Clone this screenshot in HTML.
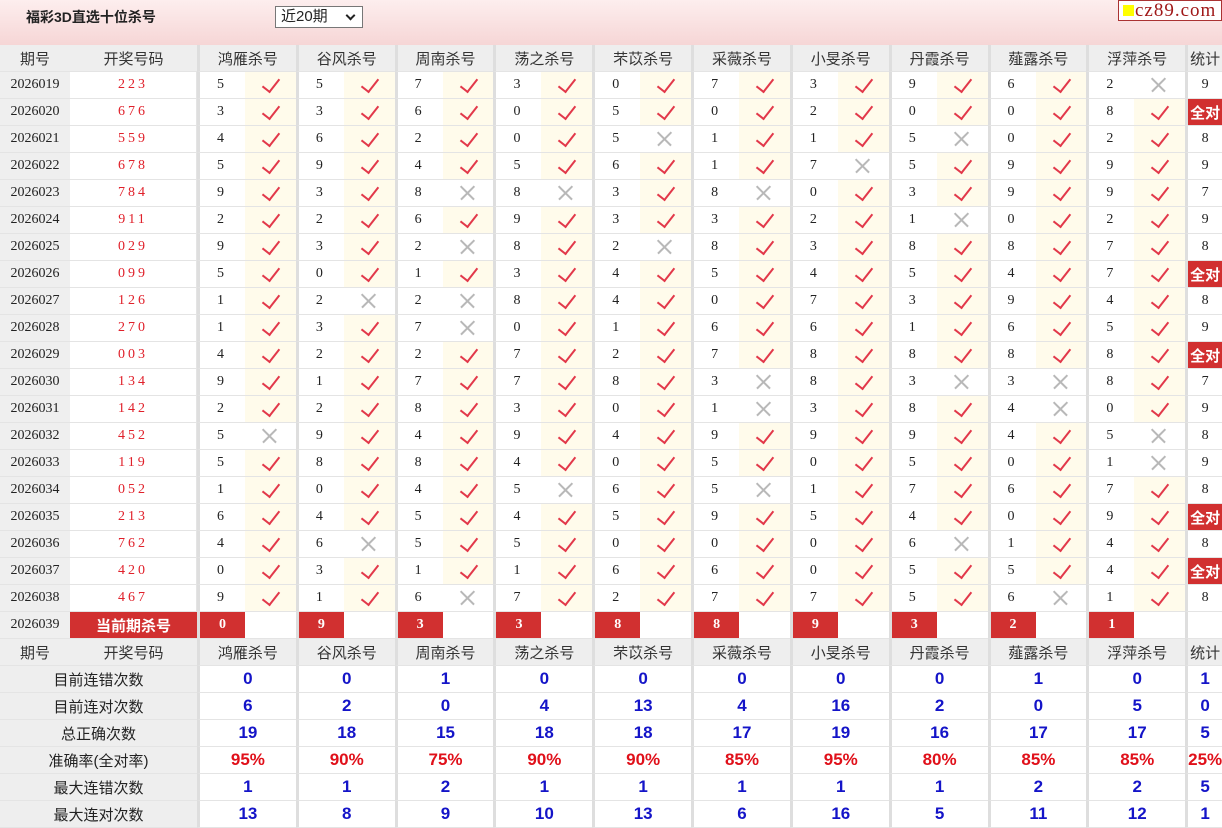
<!DOCTYPE html>
<html><head><meta charset="utf-8"><style>
body{margin:0;width:1222px;height:826px;overflow:hidden;background:#fff;font-family:"Liberation Sans","Noto Sans CJK SC",sans-serif}
.top{position:absolute;left:0;top:0;width:1222px;height:45px;background:linear-gradient(#fdeeee,#f6d6d6)}
.ttl{position:absolute;left:26px;top:7px;font-size:14px;font-weight:bold;color:#222}
.sel{position:absolute;left:275px;top:6px;width:88px;height:22px;border:1px solid #777;background:#fff;font-size:15px;color:#222;box-sizing:border-box;padding-left:5px;line-height:20px}
.sel:after{content:"";position:absolute;right:8px;top:5px;width:5px;height:5px;border:solid #222;border-width:0 2px 2px 0;transform:rotate(45deg)}
.logo{position:absolute;left:1118px;top:0;width:104px;height:21px;border:1px solid #a33;box-sizing:border-box;background:#fff;font-family:"Liberation Serif",serif;font-size:19px;color:#a01818;line-height:19px;padding-left:16px;letter-spacing:1px}
.logo:before{content:"";position:absolute;left:4px;top:4px;width:11px;height:11px;background:#ff0}
table{position:absolute;left:0;top:45px;border-collapse:separate;border-spacing:0;table-layout:fixed;width:1222px}
td{height:26px;border-bottom:1px solid #e4e4e4;padding:0;font-size:14px;text-align:center;color:#222;white-space:nowrap;overflow:hidden}
tr.h td{background:#eeeeee;color:#333;font-size:15px}
td.p{background:#efefef;font-family:"Liberation Serif",serif;font-size:14px}
td.d{color:#e0202a;font-family:"Liberation Serif",serif;letter-spacing:3px;border-right:1px solid #e4e4e4}
td.n{border-left:3px solid #dedede;text-align:left;padding-left:17px;font-family:"Liberation Serif",serif;font-size:14px}
tr.h td.g,td.v{border-left:3px solid #dedede}
td.k{background:#fffbeb;position:relative}
td.k:after{content:"";position:absolute;left:21px;top:3px;width:8px;height:15px;border:solid #e2384a;border-width:0 2px 2px 0;transform:rotate(38deg)}
td.x{position:relative}
td.x:before,td.x:after{content:"";position:absolute;left:15px;top:12px;width:19px;height:1.5px;background:#b8b8b8;transform:rotate(45deg)}
td.x:after{transform:rotate(-45deg)}
td.t{border-left:3px solid #dedede;font-family:"Liberation Serif",serif}
td.q{border-left:3px solid #dedede;background:#d13030;color:#fff;font-weight:bold;font-size:15px}
td.cur{background:#d13030;color:#fff;font-weight:bold;font-size:15px}
td.rn{border-left:3px solid #dedede;background:#d13030;color:#fff;font-weight:bold;font-family:"Liberation Serif",serif}
td.l{background:#eeeeee;font-size:15px;color:#222}
td.v{color:#1414c8;font-weight:bold;font-size:17px}
tr.pc td.v{color:#e0101a}
</style></head><body>
<div class="top"><div class="ttl">福彩3D直选十位杀号</div><div class="sel">近20期</div><div class="logo">cz89.com</div></div>
<table>
<colgroup><col style="width:70px"><col style="width:127px"><col style="width:48px"><col style="width:50.8px"><col style="width:48px"><col style="width:50.8px"><col style="width:48px"><col style="width:50.8px"><col style="width:48px"><col style="width:50.8px"><col style="width:48px"><col style="width:50.8px"><col style="width:48px"><col style="width:50.8px"><col style="width:48px"><col style="width:50.8px"><col style="width:48px"><col style="width:50.8px"><col style="width:48px"><col style="width:50.8px"><col style="width:48px"><col style="width:50.8px"><col style="width:37px"></colgroup>
<tr class="h"><td>期号</td><td>开奖号码</td><td class="g" colspan="2">鸿雁杀号</td><td class="g" colspan="2">谷风杀号</td><td class="g" colspan="2">周南杀号</td><td class="g" colspan="2">荡之杀号</td><td class="g" colspan="2">芣苡杀号</td><td class="g" colspan="2">采薇杀号</td><td class="g" colspan="2">小旻杀号</td><td class="g" colspan="2">丹霞杀号</td><td class="g" colspan="2">薤露杀号</td><td class="g" colspan="2">浮萍杀号</td><td class="g">统计</td></tr>
<tr><td class="p">2026019</td><td class="d">223</td><td class="n">5</td><td class="k"></td><td class="n">5</td><td class="k"></td><td class="n">7</td><td class="k"></td><td class="n">3</td><td class="k"></td><td class="n">0</td><td class="k"></td><td class="n">7</td><td class="k"></td><td class="n">3</td><td class="k"></td><td class="n">9</td><td class="k"></td><td class="n">6</td><td class="k"></td><td class="n">2</td><td class="x"></td><td class="t">9</td></tr>
<tr><td class="p">2026020</td><td class="d">676</td><td class="n">3</td><td class="k"></td><td class="n">3</td><td class="k"></td><td class="n">6</td><td class="k"></td><td class="n">0</td><td class="k"></td><td class="n">5</td><td class="k"></td><td class="n">0</td><td class="k"></td><td class="n">2</td><td class="k"></td><td class="n">0</td><td class="k"></td><td class="n">0</td><td class="k"></td><td class="n">8</td><td class="k"></td><td class="q">全对</td></tr>
<tr><td class="p">2026021</td><td class="d">559</td><td class="n">4</td><td class="k"></td><td class="n">6</td><td class="k"></td><td class="n">2</td><td class="k"></td><td class="n">0</td><td class="k"></td><td class="n">5</td><td class="x"></td><td class="n">1</td><td class="k"></td><td class="n">1</td><td class="k"></td><td class="n">5</td><td class="x"></td><td class="n">0</td><td class="k"></td><td class="n">2</td><td class="k"></td><td class="t">8</td></tr>
<tr><td class="p">2026022</td><td class="d">678</td><td class="n">5</td><td class="k"></td><td class="n">9</td><td class="k"></td><td class="n">4</td><td class="k"></td><td class="n">5</td><td class="k"></td><td class="n">6</td><td class="k"></td><td class="n">1</td><td class="k"></td><td class="n">7</td><td class="x"></td><td class="n">5</td><td class="k"></td><td class="n">9</td><td class="k"></td><td class="n">9</td><td class="k"></td><td class="t">9</td></tr>
<tr><td class="p">2026023</td><td class="d">784</td><td class="n">9</td><td class="k"></td><td class="n">3</td><td class="k"></td><td class="n">8</td><td class="x"></td><td class="n">8</td><td class="x"></td><td class="n">3</td><td class="k"></td><td class="n">8</td><td class="x"></td><td class="n">0</td><td class="k"></td><td class="n">3</td><td class="k"></td><td class="n">9</td><td class="k"></td><td class="n">9</td><td class="k"></td><td class="t">7</td></tr>
<tr><td class="p">2026024</td><td class="d">911</td><td class="n">2</td><td class="k"></td><td class="n">2</td><td class="k"></td><td class="n">6</td><td class="k"></td><td class="n">9</td><td class="k"></td><td class="n">3</td><td class="k"></td><td class="n">3</td><td class="k"></td><td class="n">2</td><td class="k"></td><td class="n">1</td><td class="x"></td><td class="n">0</td><td class="k"></td><td class="n">2</td><td class="k"></td><td class="t">9</td></tr>
<tr><td class="p">2026025</td><td class="d">029</td><td class="n">9</td><td class="k"></td><td class="n">3</td><td class="k"></td><td class="n">2</td><td class="x"></td><td class="n">8</td><td class="k"></td><td class="n">2</td><td class="x"></td><td class="n">8</td><td class="k"></td><td class="n">3</td><td class="k"></td><td class="n">8</td><td class="k"></td><td class="n">8</td><td class="k"></td><td class="n">7</td><td class="k"></td><td class="t">8</td></tr>
<tr><td class="p">2026026</td><td class="d">099</td><td class="n">5</td><td class="k"></td><td class="n">0</td><td class="k"></td><td class="n">1</td><td class="k"></td><td class="n">3</td><td class="k"></td><td class="n">4</td><td class="k"></td><td class="n">5</td><td class="k"></td><td class="n">4</td><td class="k"></td><td class="n">5</td><td class="k"></td><td class="n">4</td><td class="k"></td><td class="n">7</td><td class="k"></td><td class="q">全对</td></tr>
<tr><td class="p">2026027</td><td class="d">126</td><td class="n">1</td><td class="k"></td><td class="n">2</td><td class="x"></td><td class="n">2</td><td class="x"></td><td class="n">8</td><td class="k"></td><td class="n">4</td><td class="k"></td><td class="n">0</td><td class="k"></td><td class="n">7</td><td class="k"></td><td class="n">3</td><td class="k"></td><td class="n">9</td><td class="k"></td><td class="n">4</td><td class="k"></td><td class="t">8</td></tr>
<tr><td class="p">2026028</td><td class="d">270</td><td class="n">1</td><td class="k"></td><td class="n">3</td><td class="k"></td><td class="n">7</td><td class="x"></td><td class="n">0</td><td class="k"></td><td class="n">1</td><td class="k"></td><td class="n">6</td><td class="k"></td><td class="n">6</td><td class="k"></td><td class="n">1</td><td class="k"></td><td class="n">6</td><td class="k"></td><td class="n">5</td><td class="k"></td><td class="t">9</td></tr>
<tr><td class="p">2026029</td><td class="d">003</td><td class="n">4</td><td class="k"></td><td class="n">2</td><td class="k"></td><td class="n">2</td><td class="k"></td><td class="n">7</td><td class="k"></td><td class="n">2</td><td class="k"></td><td class="n">7</td><td class="k"></td><td class="n">8</td><td class="k"></td><td class="n">8</td><td class="k"></td><td class="n">8</td><td class="k"></td><td class="n">8</td><td class="k"></td><td class="q">全对</td></tr>
<tr><td class="p">2026030</td><td class="d">134</td><td class="n">9</td><td class="k"></td><td class="n">1</td><td class="k"></td><td class="n">7</td><td class="k"></td><td class="n">7</td><td class="k"></td><td class="n">8</td><td class="k"></td><td class="n">3</td><td class="x"></td><td class="n">8</td><td class="k"></td><td class="n">3</td><td class="x"></td><td class="n">3</td><td class="x"></td><td class="n">8</td><td class="k"></td><td class="t">7</td></tr>
<tr><td class="p">2026031</td><td class="d">142</td><td class="n">2</td><td class="k"></td><td class="n">2</td><td class="k"></td><td class="n">8</td><td class="k"></td><td class="n">3</td><td class="k"></td><td class="n">0</td><td class="k"></td><td class="n">1</td><td class="x"></td><td class="n">3</td><td class="k"></td><td class="n">8</td><td class="k"></td><td class="n">4</td><td class="x"></td><td class="n">0</td><td class="k"></td><td class="t">9</td></tr>
<tr><td class="p">2026032</td><td class="d">452</td><td class="n">5</td><td class="x"></td><td class="n">9</td><td class="k"></td><td class="n">4</td><td class="k"></td><td class="n">9</td><td class="k"></td><td class="n">4</td><td class="k"></td><td class="n">9</td><td class="k"></td><td class="n">9</td><td class="k"></td><td class="n">9</td><td class="k"></td><td class="n">4</td><td class="k"></td><td class="n">5</td><td class="x"></td><td class="t">8</td></tr>
<tr><td class="p">2026033</td><td class="d">119</td><td class="n">5</td><td class="k"></td><td class="n">8</td><td class="k"></td><td class="n">8</td><td class="k"></td><td class="n">4</td><td class="k"></td><td class="n">0</td><td class="k"></td><td class="n">5</td><td class="k"></td><td class="n">0</td><td class="k"></td><td class="n">5</td><td class="k"></td><td class="n">0</td><td class="k"></td><td class="n">1</td><td class="x"></td><td class="t">9</td></tr>
<tr><td class="p">2026034</td><td class="d">052</td><td class="n">1</td><td class="k"></td><td class="n">0</td><td class="k"></td><td class="n">4</td><td class="k"></td><td class="n">5</td><td class="x"></td><td class="n">6</td><td class="k"></td><td class="n">5</td><td class="x"></td><td class="n">1</td><td class="k"></td><td class="n">7</td><td class="k"></td><td class="n">6</td><td class="k"></td><td class="n">7</td><td class="k"></td><td class="t">8</td></tr>
<tr><td class="p">2026035</td><td class="d">213</td><td class="n">6</td><td class="k"></td><td class="n">4</td><td class="k"></td><td class="n">5</td><td class="k"></td><td class="n">4</td><td class="k"></td><td class="n">5</td><td class="k"></td><td class="n">9</td><td class="k"></td><td class="n">5</td><td class="k"></td><td class="n">4</td><td class="k"></td><td class="n">0</td><td class="k"></td><td class="n">9</td><td class="k"></td><td class="q">全对</td></tr>
<tr><td class="p">2026036</td><td class="d">762</td><td class="n">4</td><td class="k"></td><td class="n">6</td><td class="x"></td><td class="n">5</td><td class="k"></td><td class="n">5</td><td class="k"></td><td class="n">0</td><td class="k"></td><td class="n">0</td><td class="k"></td><td class="n">0</td><td class="k"></td><td class="n">6</td><td class="x"></td><td class="n">1</td><td class="k"></td><td class="n">4</td><td class="k"></td><td class="t">8</td></tr>
<tr><td class="p">2026037</td><td class="d">420</td><td class="n">0</td><td class="k"></td><td class="n">3</td><td class="k"></td><td class="n">1</td><td class="k"></td><td class="n">1</td><td class="k"></td><td class="n">6</td><td class="k"></td><td class="n">6</td><td class="k"></td><td class="n">0</td><td class="k"></td><td class="n">5</td><td class="k"></td><td class="n">5</td><td class="k"></td><td class="n">4</td><td class="k"></td><td class="q">全对</td></tr>
<tr><td class="p">2026038</td><td class="d">467</td><td class="n">9</td><td class="k"></td><td class="n">1</td><td class="k"></td><td class="n">6</td><td class="x"></td><td class="n">7</td><td class="k"></td><td class="n">2</td><td class="k"></td><td class="n">7</td><td class="k"></td><td class="n">7</td><td class="k"></td><td class="n">5</td><td class="k"></td><td class="n">6</td><td class="x"></td><td class="n">1</td><td class="k"></td><td class="t">8</td></tr>
<tr><td class="p">2026039</td><td class="cur">当前期杀号</td><td class="rn">0</td><td></td><td class="rn">9</td><td></td><td class="rn">3</td><td></td><td class="rn">3</td><td></td><td class="rn">8</td><td></td><td class="rn">8</td><td></td><td class="rn">9</td><td></td><td class="rn">3</td><td></td><td class="rn">2</td><td></td><td class="rn">1</td><td></td><td class="t"></td></tr>
<tr class="h"><td>期号</td><td>开奖号码</td><td class="g" colspan="2">鸿雁杀号</td><td class="g" colspan="2">谷风杀号</td><td class="g" colspan="2">周南杀号</td><td class="g" colspan="2">荡之杀号</td><td class="g" colspan="2">芣苡杀号</td><td class="g" colspan="2">采薇杀号</td><td class="g" colspan="2">小旻杀号</td><td class="g" colspan="2">丹霞杀号</td><td class="g" colspan="2">薤露杀号</td><td class="g" colspan="2">浮萍杀号</td><td class="g">统计</td></tr>
<tr><td class="l" colspan="2">目前连错次数</td><td class="v" colspan="2">0</td><td class="v" colspan="2">0</td><td class="v" colspan="2">1</td><td class="v" colspan="2">0</td><td class="v" colspan="2">0</td><td class="v" colspan="2">0</td><td class="v" colspan="2">0</td><td class="v" colspan="2">0</td><td class="v" colspan="2">1</td><td class="v" colspan="2">0</td><td class="v">1</td></tr>
<tr><td class="l" colspan="2">目前连对次数</td><td class="v" colspan="2">6</td><td class="v" colspan="2">2</td><td class="v" colspan="2">0</td><td class="v" colspan="2">4</td><td class="v" colspan="2">13</td><td class="v" colspan="2">4</td><td class="v" colspan="2">16</td><td class="v" colspan="2">2</td><td class="v" colspan="2">0</td><td class="v" colspan="2">5</td><td class="v">0</td></tr>
<tr><td class="l" colspan="2">总正确次数</td><td class="v" colspan="2">19</td><td class="v" colspan="2">18</td><td class="v" colspan="2">15</td><td class="v" colspan="2">18</td><td class="v" colspan="2">18</td><td class="v" colspan="2">17</td><td class="v" colspan="2">19</td><td class="v" colspan="2">16</td><td class="v" colspan="2">17</td><td class="v" colspan="2">17</td><td class="v">5</td></tr>
<tr class="pc"><td class="l" colspan="2">准确率(全对率)</td><td class="v" colspan="2">95%</td><td class="v" colspan="2">90%</td><td class="v" colspan="2">75%</td><td class="v" colspan="2">90%</td><td class="v" colspan="2">90%</td><td class="v" colspan="2">85%</td><td class="v" colspan="2">95%</td><td class="v" colspan="2">80%</td><td class="v" colspan="2">85%</td><td class="v" colspan="2">85%</td><td class="v">25%</td></tr>
<tr><td class="l" colspan="2">最大连错次数</td><td class="v" colspan="2">1</td><td class="v" colspan="2">1</td><td class="v" colspan="2">2</td><td class="v" colspan="2">1</td><td class="v" colspan="2">1</td><td class="v" colspan="2">1</td><td class="v" colspan="2">1</td><td class="v" colspan="2">1</td><td class="v" colspan="2">2</td><td class="v" colspan="2">2</td><td class="v">5</td></tr>
<tr><td class="l" colspan="2">最大连对次数</td><td class="v" colspan="2">13</td><td class="v" colspan="2">8</td><td class="v" colspan="2">9</td><td class="v" colspan="2">10</td><td class="v" colspan="2">13</td><td class="v" colspan="2">6</td><td class="v" colspan="2">16</td><td class="v" colspan="2">5</td><td class="v" colspan="2">11</td><td class="v" colspan="2">12</td><td class="v">1</td></tr>
</table>
</body></html>
